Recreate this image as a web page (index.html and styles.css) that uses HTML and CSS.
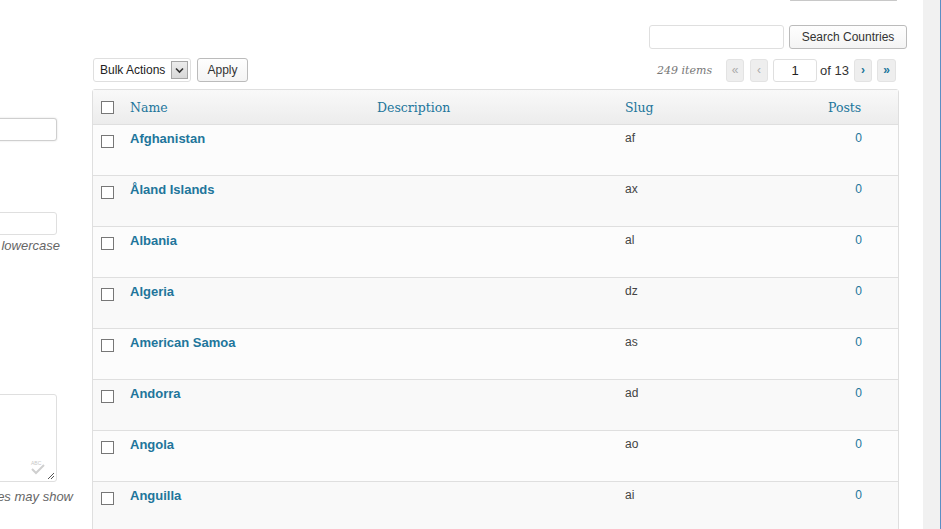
FILE: index.html
```html
<!DOCTYPE html>
<html>
<head>
<meta charset="utf-8">
<link rel="stylesheet" href="styles.css">
</head>
<body>
<div class="screen">
  <div class="left">
    <div class="form">
      <div class="field field-name"></div>
      <div class="field field-slug"></div>
      <p class="desc desc-slug"><span>It is usually all lowercase</span></p>
      <div class="area">
        <svg class="spell" width="16" height="15" viewBox="0 0 16 15">
          <text x="1" y="5" font-family="Liberation Sans, sans-serif" font-size="5" fill="#c8c8c8">ABC</text>
          <path d="M2 9 L6 13 L14 5" fill="none" stroke="#cfcfcf" stroke-width="2"/>
        </svg>
        <svg class="grip" width="8" height="8" viewBox="0 0 8 8">
          <path d="M1 7 L7 1 M4 7 L7 4" stroke="#555" stroke-width="1"/>
        </svg>
      </div>
      <p class="desc desc-area"><span>however, some themes may show</span></p>
    </div>
  </div>

  <div class="main">
    <div class="tab-bottom"></div>

    <div class="search-row">
      <div class="search-input"></div>
      <div class="btn btn-search">Search Countries</div>
    </div>

    <div class="nav-row">
      <div class="bulk">
        <div class="select">
          <span>Bulk Actions</span>
          <span class="select-arrow">
            <svg width="9" height="7" viewBox="0 0 9 7"><path d="M1 1.5 L4.5 5 L8 1.5" fill="none" stroke="#333" stroke-width="1.6"/></svg>
          </span>
        </div>
        <div class="btn btn-apply">Apply</div>
      </div>
      <div class="pager">
        <span class="count">249 items</span>
        <span class="pg pg-off pg-first">«</span>
        <span class="pg pg-off">‹</span>
        <span class="pg-input">1</span>
        <span class="of">of 13</span>
        <span class="pg">›</span>
        <span class="pg pg-last">»</span>
      </div>
    </div>

    <table class="list">
      <colgroup>
        <col class="c-cb"><col class="c-name"><col class="c-desc"><col class="c-slug"><col class="c-posts">
      </colgroup>
      <thead>
        <tr>
          <th class="cb"><span class="check"></span></th>
          <th>Name</th>
          <th>Description</th>
          <th>Slug</th>
          <th class="posts">Posts</th>
        </tr>
      </thead>
      <tbody>
        <tr class="alt"><td class="cb"><span class="check"></span></td><td class="name">Afghanistan</td><td></td><td class="slug">af</td><td class="num">0</td></tr>
        <tr><td class="cb"><span class="check"></span></td><td class="name">Åland Islands</td><td></td><td class="slug">ax</td><td class="num">0</td></tr>
        <tr class="alt"><td class="cb"><span class="check"></span></td><td class="name">Albania</td><td></td><td class="slug">al</td><td class="num">0</td></tr>
        <tr><td class="cb"><span class="check"></span></td><td class="name">Algeria</td><td></td><td class="slug">dz</td><td class="num">0</td></tr>
        <tr class="alt"><td class="cb"><span class="check"></span></td><td class="name">American Samoa</td><td></td><td class="slug">as</td><td class="num">0</td></tr>
        <tr><td class="cb"><span class="check"></span></td><td class="name">Andorra</td><td></td><td class="slug">ad</td><td class="num">0</td></tr>
        <tr class="alt"><td class="cb"><span class="check"></span></td><td class="name">Angola</td><td></td><td class="slug">ao</td><td class="num">0</td></tr>
        <tr><td class="cb"><span class="check"></span></td><td class="name">Anguilla</td><td></td><td class="slug">ai</td><td class="num">0</td></tr>
      </tbody>
    </table>
  </div>

  <div class="spacer"></div>
  <div class="gutter"></div>
</div>
</body>
</html>
```

FILE: styles.css
```css
html, body {
  margin: 0;
  padding: 0;
  background: #fff;
  overflow: hidden;
}
body {
  font-family: "Liberation Sans", Arial, sans-serif;
  font-size: 13px;
  color: #333;
}
.screen {
  display: flex;
  width: 941px;
  height: 529px;
  overflow: hidden;
}

/* left form column (cut off) */
.left {
  width: 92px;
  flex: none;
  overflow: hidden;
}
.form {
  width: 316px;
  margin-left: -243px;
}
.field {
  box-sizing: border-box;
  width: 300px;
  height: 23px;
  border: 1px solid #dfdfdf;
  border-radius: 3px;
  background: #fff;
}
.field-name {
  margin-top: 118px;
  border-color: #cfcfcf;
  box-shadow: 0 0 2px rgba(0,0,0,0.15);
}
.field-slug {
  margin-top: 71px;
}
.desc {
  margin: 0;
  display: flex;
  justify-content: flex-end;
  font-style: italic;
  color: #666;
  font-size: 13px;
  line-height: 15px;
  white-space: nowrap;
}
.desc-slug {
  margin-top: 3px;
  padding-right: 13px;
}
.area {
  box-sizing: border-box;
  position: relative;
  width: 300px;
  height: 88px;
  margin-top: 141px;
  border: 1px solid #dfdfdf;
  border-radius: 3px;
  background: #fff;
}
.spell {
  position: absolute;
  right: 10px;
  bottom: 6px;
}
.grip {
  position: absolute;
  right: 1px;
  bottom: 1px;
}
.desc-area {
  margin-top: 7px;
}

/* main column */
.main {
  width: 815px;
  flex: none;
  display: flex;
  flex-direction: column;
}
.tab-bottom {
  box-sizing: border-box;
  align-self: flex-end;
  width: 107px;
  height: 2px;
  margin-right: 10px;
  border: 1px solid #c8c8c8;
  border-top: none;
  border-radius: 0 0 3px 3px;
  background: #f4f4f4;
}
.search-row {
  display: flex;
  justify-content: flex-end;
  gap: 5px;
  margin-top: 24px;
}
.search-input {
  box-sizing: border-box;
  width: 135px;
  height: 24px;
  margin-left: 1px;
  border: 1px solid #dfdfdf;
  border-radius: 3px;
  background: #fff;
}
.btn {
  box-sizing: border-box;
  height: 24px;
  display: flex;
  align-items: center;
  justify-content: center;
  border: 1px solid #bbb;
  border-radius: 3px;
  background: linear-gradient(to bottom, #fefefe, #f4f4f4);
  color: #333;
  font-size: 12px;
}
.btn-search {
  width: 118px;
}
.nav-row {
  display: flex;
  justify-content: space-between;
  align-items: center;
  margin-top: 9px;
  height: 24px;
}
.bulk {
  display: flex;
  gap: 6px;
  margin-left: 1px;
}
.select {
  box-sizing: border-box;
  width: 98px;
  height: 24px;
  display: flex;
  align-items: center;
  justify-content: space-between;
  padding: 0 2px 0 6px;
  border: 1px solid #dfdfdf;
  border-radius: 3px;
  background: #fff;
  font-size: 12px;
  color: #222;
}
.select-arrow {
  box-sizing: border-box;
  width: 17px;
  height: 18px;
  display: flex;
  align-items: center;
  justify-content: center;
  border: 1px solid #a6a6a6;
  background: linear-gradient(to bottom, #ececec, #d8d8d8);
}
.btn-apply {
  width: 51px;
  height: 24px;
}
.pager {
  display: flex;
  align-items: center;
  margin-right: 11px;
}
.count {
  font-family: "DejaVu Serif", Georgia, serif;
  font-style: italic;
  font-size: 11px;
  color: #777;
  margin-right: 14px;
}
.pg {
  box-sizing: border-box;
  width: 18px;
  height: 23px;
  display: flex;
  align-items: center;
  justify-content: center;
  border: 1px solid #e3e3e3;
  border-radius: 3px;
  background: #eee;
  color: #21759b;
  font-size: 12px;
  font-weight: bold;
  margin-left: 5px;
}
.pg-first {
  margin-left: 0;
}
.pg-off {
  color: #aaa;
  font-weight: normal;
}
.pg-off + .pg-off {
  margin-left: 6px;
}
.pg-last {
  width: 19px;
}
.pg-input {
  box-sizing: border-box;
  width: 44px;
  height: 23px;
  margin-left: 5px;
  display: flex;
  align-items: center;
  justify-content: center;
  border: 1px solid #dfdfdf;
  border-radius: 3px;
  background: #fff;
  color: #222;
}
.of {
  margin-left: 3px;
  color: #333;
}

/* table */
.list {
  margin-top: 7px;
  width: 807px;
  table-layout: fixed;
  border-collapse: separate;
  border-spacing: 0;
  border: 1px solid #dfdfdf;
  border-radius: 3px;
  background: #f9f9f9;
}
.c-cb { width: 29px; }
.c-name { width: 247px; }
.c-desc { width: 248px; }
.c-slug { width: 203px; }
.c-posts { width: 78px; }
.list th {
  height: 34px;
  padding: 0 8px;
  text-align: left;
  font-family: "DejaVu Serif", Georgia, serif;
  font-weight: normal;
  font-size: 12.5px;
  color: #21759b;
  background: linear-gradient(to bottom, #f9f9f9, #ececec);
  border-bottom: 1px solid #dfdfdf;
  vertical-align: middle;
}
.list th.cb, .list td.cb {
  padding: 0 0 0 8px;
}
.list th.posts {
  text-align: right;
  padding-right: 38px;
}
.list td {
  height: 51px;
  padding: 5px 8px 0;
  box-sizing: border-box;
  vertical-align: top;
  border-bottom: 1px solid #dfdfdf;
  line-height: 17px;
  font-size: 12px;
}
.list td.cb {
  padding-top: 10px;
}
.list tr.alt td {
  background: #fcfcfc;
}
.check {
  display: block;
  box-sizing: border-box;
  width: 13px;
  height: 13px;
  border: 1px solid #777;
  background: #fff;
}
.list td.name {
  font-weight: bold;
  font-size: 13px;
  color: #21759b;
}
.list td.slug {
  color: #444;
}
.list td.num {
  text-align: right;
  padding-right: 36px;
  color: #21759b;
}

/* right gutter */
.spacer {
  width: 16px;
  flex: none;
}
.gutter {
  width: 17px;
  flex: none;
  background: #f1f1f1;
  border-right: 1px solid #5b8ec4;
}
```
